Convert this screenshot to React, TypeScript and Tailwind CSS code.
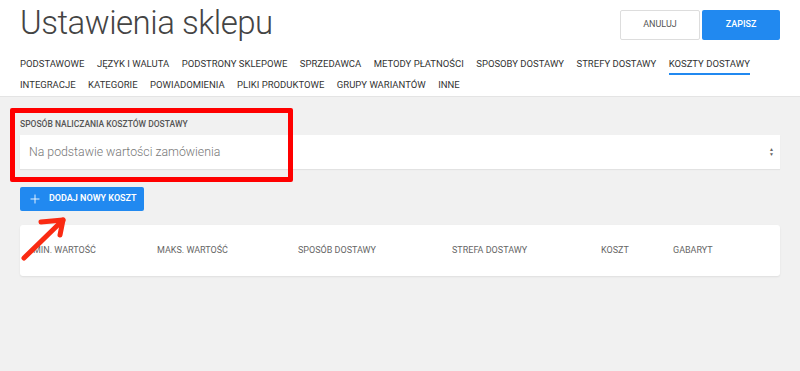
import { Plus } from 'lucide-react';

const tabsRow1 = [
  'Podstawowe',
  'Język i waluta',
  'Podstrony sklepowe',
  'Sprzedawca',
  'Metody płatności',
  'Sposoby dostawy',
  'Strefy dostawy',
  'Koszty dostawy',
];

const tabsRow2 = ['Integracje', 'Kategorie', 'Powiadomienia', 'Pliki produktowe', 'Grupy wariantów', 'Inne'];

const columns = [
  { label: 'Min. wartość', w: 'w-[124px]' },
  { label: 'Maks. wartość', w: 'w-[141px]' },
  { label: 'Sposób dostawy', w: 'w-[154px]' },
  { label: 'Strefa dostawy', w: 'w-[149px]' },
  { label: 'Koszt', w: 'w-[72px]' },
  { label: 'Gabaryt', w: 'w-[80px]' },
];

function Tab({ label, active }: { label: string; active?: boolean }) {
  return (
    <div className="relative uppercase">
      {label}
      {active && <div className="absolute left-0 right-0 top-[15px] h-[2px] bg-[#2189f0]" />}
    </div>
  );
}

export default function App() {
  return (
    <div className="relative h-[371px] w-[800px] overflow-hidden bg-[#f1f1f1] font-['Roboto',sans-serif]">
      <div className="border-b border-[#e4e4e4] bg-white px-5">
        <div className="flex items-start justify-between">
          <h1 className="pt-[2px] text-[33px] font-light leading-[42px] tracking-[-0.5px] text-[#444]">
            Ustawienia sklepu
          </h1>
          <div className="mt-[10px] flex gap-[2px]">
            <button className="h-[30px] w-[80px] rounded-[2px] border border-[#ddd] bg-white text-[9px] text-[#555]">
              ANULUJ
            </button>
            <button className="h-[30px] w-[78px] rounded-[2px] bg-[#2189f0] text-[9px] font-medium text-white">
              ZAPISZ
            </button>
          </div>
        </div>
        <div className="mt-[14px] flex gap-[12.5px] text-[9.5px] leading-[12px] text-[#333]">
          {tabsRow1.map((t) => (
            <Tab key={t} label={t} active={t === 'Koszty dostawy'} />
          ))}
        </div>
        <div className="mt-[9px] flex gap-[12.5px] pb-[5px] text-[9.5px] leading-[12px] text-[#333]">
          {tabsRow2.map((t) => (
            <Tab key={t} label={t} />
          ))}
        </div>
      </div>

      <div className="px-5 pt-[22px]">
        <div className="text-[8.5px] font-medium uppercase leading-[10px] text-[#555]">
          Sposób naliczania kosztów dostawy
        </div>
        <div className="mt-[6px] flex h-[34px] items-center justify-between bg-white pl-[9px] pr-[6px] shadow-[0_1px_1px_rgba(0,0,0,0.06)]">
          <span className="text-[12.3px] font-light text-[#777]">Na podstawie wartości zamówienia</span>
          <span className="flex flex-col items-center leading-none text-[#666]">
            <span className="text-[5px]">▲</span>
            <span className="text-[5px]">▼</span>
          </span>
        </div>

        <button className="mt-[18px] flex h-[24px] w-[124px] items-center gap-[7px] rounded-[2px] bg-[#2189f0] pl-[8px] text-[9px] font-semibold text-white">
          <Plus size={14} strokeWidth={1.5} />
          DODAJ NOWY KOSZT
        </button>

        <div className="mt-[14px] flex h-[51px] items-center rounded-[3px] bg-white pl-[13px] text-[9px] uppercase text-[#666] shadow-[0_1px_2px_rgba(0,0,0,0.08)]">
          {columns.map((c) => (
            <div key={c.label} className={c.w}>
              {c.label}
            </div>
          ))}
        </div>
      </div>

      <div className="absolute left-[10px] top-[108px] h-[74px] w-[283px] rounded-[2px] border-[5px] border-[#f00]" />

      <svg className="absolute left-0 top-0" width="800" height="371">
        <g stroke="#fa2a12" strokeWidth="5" strokeLinecap="round" fill="none">
          <line x1="24" y1="258" x2="62" y2="221" />
          <line x1="41" y1="222" x2="63" y2="220" />
          <line x1="63" y1="220" x2="60" y2="235" />
        </g>
      </svg>
    </div>
  );
}
